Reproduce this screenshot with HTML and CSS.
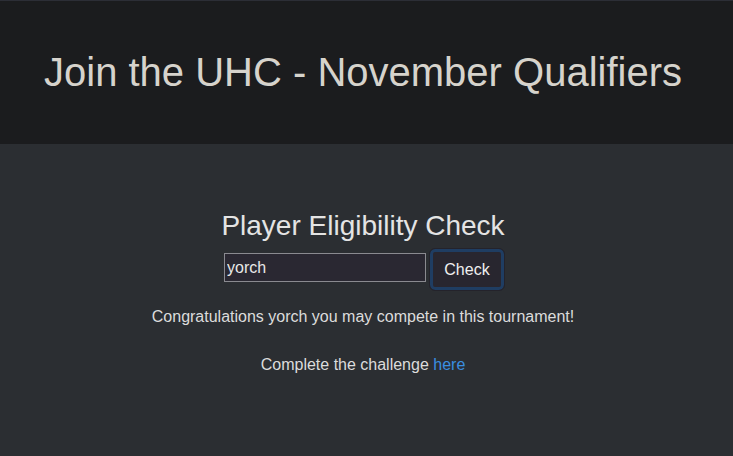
FILE: index.html
```html
<!DOCTYPE html>
<html>
<head>
<meta charset="utf-8">
<link rel="stylesheet" href="styles.css">
</head>
<body>
<header class="hero">
  <h1 class="hero-title">Join the UHC - November Qualifiers</h1>
</header>
<main class="content">
  <h3 class="check-title">Player Eligibility Check</h3>
  <form class="check-form">
    <input class="name-input" type="text" value="yorch">
    <button class="check-btn" type="button">Check</button>
  </form>
  <p class="result">Congratulations yorch you may compete in this tournament!</p>
  <p class="challenge">Complete the challenge <a class="link" href="#">here</a></p>
</main>
</body>
</html>
```
FILE: styles.css
```css
html, body {
  margin: 0;
  padding: 0;
  height: 100%;
}
body {
  background: #2b2e32;
  font-family: "Liberation Sans", Arial, sans-serif;
  color: #dcdcdc;
  border-top: 1px solid #2c2e36;
}
.hero {
  background: #1b1c1e;
  height: 143px;
  display: flex;
  align-items: center;
  justify-content: center;
  padding-right: 7px;
}
.hero-title {
  margin: 0;
  font-size: 40px;
  font-weight: 300;
  color: #d6d3cc;
}
.content {
  display: flex;
  flex-direction: column;
  align-items: center;
  padding-top: 66px;
  padding-right: 7px;
}
.check-title {
  margin: 0;
  font-size: 28px;
  font-weight: 400;
  color: #e4e4e4;
  line-height: 32px;
}
.check-form {
  display: flex;
  align-items: flex-start;
  gap: 3px;
  margin: 6px 0 0 3px;
}
.name-input {
  width: 202px;
  height: 29px;
  margin-top: 5px;
  box-sizing: border-box;
  background: #2a2832;
  border: 1px solid #8a8a90;
  color: #e8e8e8;
  font-family: "Liberation Sans", Arial, sans-serif;
  font-size: 16px;
  padding: 0 2px;
  outline: none;
}
.check-btn {
  width: 76px;
  height: 43px;
  box-sizing: border-box;
  background: #28262f;
  border: 1px solid #24232b;
  border-radius: 6px;
  box-shadow: 0 0 0 3px #1f3d62 inset;
  color: #f0f0f0;
  font-family: "Liberation Sans", Arial, sans-serif;
  font-size: 16px;
  padding-top: 2px;
}
.result {
  margin: 14px 0 0;
  font-size: 16px;
  line-height: 24px;
}
.challenge {
  margin: 24px 0 0;
  font-size: 16px;
  line-height: 24px;
}
.link {
  color: #3a8fe0;
  text-decoration: none;
}
```
